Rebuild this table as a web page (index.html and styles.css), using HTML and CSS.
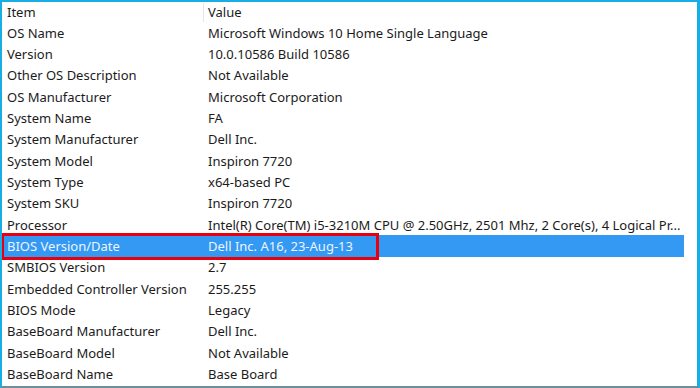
FILE: index.html
```html
<!DOCTYPE html>
<html>
<head>
<meta charset="utf-8">
<link rel="stylesheet" href="styles.css">
</head>
<body>
<div class="frame">
  <div class="header">
    <div class="col-item">Item</div>
    <div class="col-value">Value</div>
  </div>
  <div class="rows">
    <div class="row"><div class="col-item">OS Name</div><div class="col-value">Microsoft Windows 10 Home Single Language</div></div>
    <div class="row"><div class="col-item">Version</div><div class="col-value">10.0.10586 Build 10586</div></div>
    <div class="row"><div class="col-item">Other OS Description</div><div class="col-value">Not Available</div></div>
    <div class="row"><div class="col-item">OS Manufacturer</div><div class="col-value">Microsoft Corporation</div></div>
    <div class="row"><div class="col-item">System Name</div><div class="col-value">FA</div></div>
    <div class="row"><div class="col-item">System Manufacturer</div><div class="col-value">Dell Inc.</div></div>
    <div class="row"><div class="col-item">System Model</div><div class="col-value">Inspiron 7720</div></div>
    <div class="row"><div class="col-item">System Type</div><div class="col-value">x64-based PC</div></div>
    <div class="row"><div class="col-item">System SKU</div><div class="col-value">Inspiron 7720</div></div>
    <div class="row"><div class="col-item">Processor</div><div class="col-value">Intel(R) Core(TM) i5-3210M CPU @ 2.50GHz, 2501 Mhz, 2 Core(s), 4 Logical Pr...</div></div>
    <div class="row selected"><div class="col-item">BIOS Version/Date</div><div class="col-value">Dell Inc. A16, 23-Aug-13</div><div class="mark"></div></div>
    <div class="row"><div class="col-item">SMBIOS Version</div><div class="col-value">2.7</div></div>
    <div class="row"><div class="col-item">Embedded Controller Version</div><div class="col-value">255.255</div></div>
    <div class="row"><div class="col-item">BIOS Mode</div><div class="col-value">Legacy</div></div>
    <div class="row"><div class="col-item">BaseBoard Manufacturer</div><div class="col-value">Dell Inc.</div></div>
    <div class="row"><div class="col-item">BaseBoard Model</div><div class="col-value">Not Available</div></div>
    <div class="row"><div class="col-item">BaseBoard Name</div><div class="col-value">Base Board</div></div>
  </div>
</div>
</body>
</html>
```

FILE: styles.css
```css
html, body {
  margin: 0;
  padding: 0;
  background: #ffffff;
}
.frame {
  box-sizing: border-box;
  width: 700px;
  height: 388px;
  border-left: 2px solid #17aee6;
  border-top: 2px solid #17aee6;
  border-right: 3px solid #17aee6;
  border-bottom: 2px solid #6c8fa0;
  overflow: hidden;
  font-family: "Noto Sans", sans-serif;
  font-size: 13px;
  color: #1b1b1b;
  background: #ffffff;
}
.header, .row {
  display: grid;
  grid-template-columns: 201px 1fr;
  align-items: center;
  white-space: nowrap;
}
.header {
  height: 20px;
}
.header .col-value {
  border-left: 1px solid #e6e6e6;
  height: 19px;
  line-height: 19px;
  padding-left: 4px;
}
.row {
  height: 21.33px;
  position: relative;
  margin-right: 13px;
}
.col-item {
  padding-left: 5px;
  overflow: hidden;
}
.col-value {
  padding-left: 5px;
  overflow: hidden;
}
.row.selected {
  background: #3399f3;
  color: #eef4ff;
}
.mark {
  position: absolute;
  left: -1px;
  top: -2px;
  width: 372px;
  height: 21px;
  border: 3px solid #e8000e;
}
```
